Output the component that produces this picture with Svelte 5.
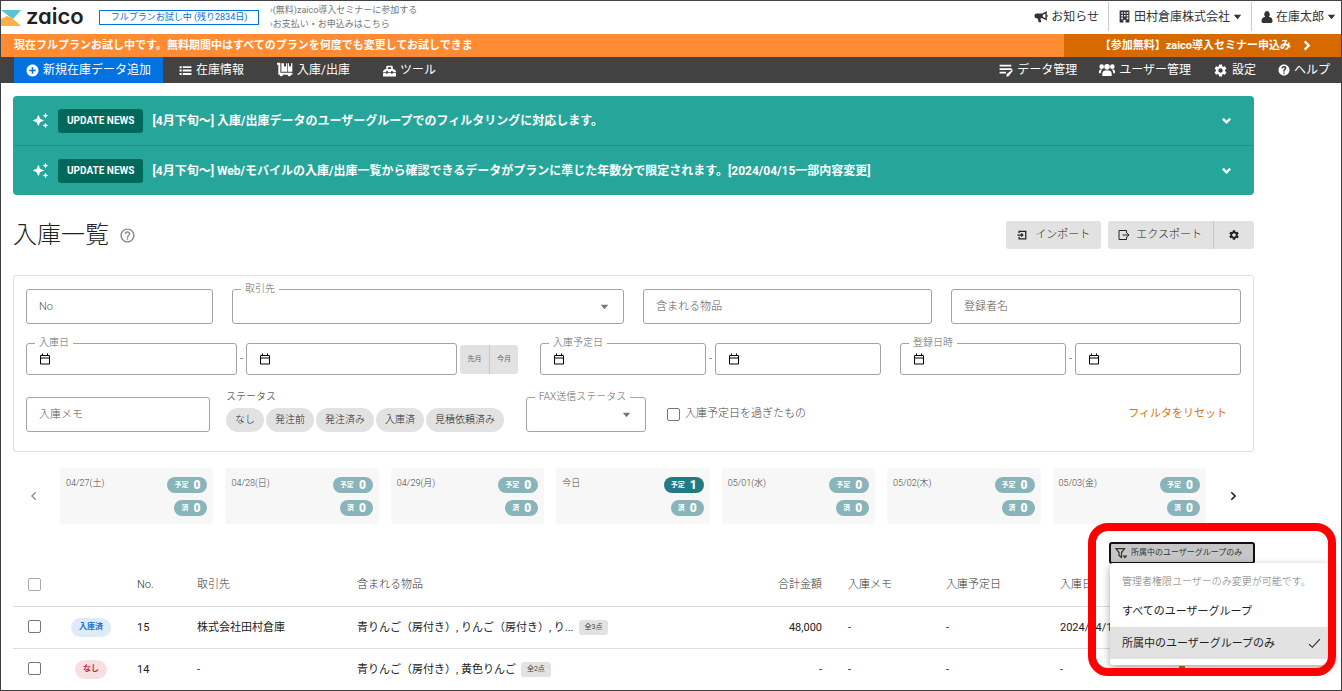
<script lang="ts">
	interface Day {
		label: string;
		planned: number;
		done: number;
	}

	interface Row {
		no: number;
		status: string;
		tone: 'blue' | 'red';
		supplier: string;
		items: string;
		count: string;
		total: string;
		memo: string;
		planned: string;
		date: string;
	}

	// 24x24 filled icon paths
	const icons = {
		plus: 'M12 1C5.9 1 1 5.9 1 12s4.900 11 11 11 11-4.900 11-11S18.100 1 12 1zm6 12.500h-4.500V18h-3v-4.500H6v-3h4.500V6h3v4.500H18v3z',
		list: 'M1 4h4v4H1zM7 4h16v3.500H7zM1 10h4v4H1zM7 10.300h16v3.500H7zM1 16.500h4v4H1zM7 16.700h16v3.500H7z',
		cart: 'M0 1h5v15h18v3h-2a2.500 2.500 0 1 1-5 0H9a2.500 2.500 0 1 1-5 0H2V4H0zM6.500 2h4v5l1.500-1 1.500 1V2h1.500v12.500h-8.500zM16 2h2v5l1.500-1 1.500 1V2h2v12.500h-7z',
		toolbox: 'M8 3h8a2 2 0 0 1 2 2v4h2l4 4v2h-6v-2h-3v2H9v-2H6v2H0v-2l4-4h2V5a2 2 0 0 1 2-2zm1 3v3h6V6zM0 16.500h6v1.500h3v-1.500h6v1.500h3v-1.500h6V23H0z',
		edit: 'M1 3h20v3H1zM1 9h21v3H1zM1 15h11v3H1zM22.500 11.500l1.500 1.500-7.500 9.500-4 .5.8-4z',
		users: 'M12 3a4.200 4.200 0 1 1 0 8.400A4.200 4.200 0 0 1 12 3zM5 21v-4c0-3 3-4.500 7-4.500s7 1.500 7 4.500v4zM4 3.500a3.500 3.500 0 1 1 0 7 3.500 3.500 0 0 1 0-7zm16 0a3.500 3.500 0 1 1 0 7 3.500 3.500 0 0 1 0-7zM0 17v-3c0-2 2-3 5-2.500-1.500 1-2.500 3-2.500 5.500zm24 0v-3c0-2-2-3-5-2.500 1.500 1 2.500 3 2.500 5.500z',
		gear: 'M19.140 12.940c.04-.3.06-.61.06-.94 0-.32-.02-.64-.07-.94l2.030-1.580c.18-.14.23-.41.12-.61l-1.920-3.320c-.12-.22-.37-.29-.59-.22l-2.390.96c-.5-.38-1.030-.7-1.620-.94l-.36-2.540c-.04-.24-.24-.41-.48-.41h-3.840c-.24 0-.43.17-.47.41l-.36 2.540c-.59.24-1.130.57-1.620.94l-2.390-.96c-.22-.08-.47 0-.59.22L2.740 8.870c-.12.21-.08.47.12.61l2.030 1.580c-.05.3-.09.63-.09.94s.02.64.07.94l-2.030 1.580c-.18.14-.23.41-.12.61l1.920 3.320c.12.22.37.29.59.22l2.390-.96c.5.38 1.030.7 1.620.94l.36 2.540c.05.24.24.41.48.41h3.840c.24 0 .44-.17.47-.41l.36-2.540c.59-.24 1.130-.56 1.620-.94l2.390.96c.22.08.47 0 .59-.22l1.920-3.320c.12-.22.07-.47-.12-.61l-2.010-1.580zM12 15.600c-1.980 0-3.600-1.620-3.600-3.600s1.620-3.600 3.600-3.600 3.600 1.620 3.600 3.600-1.620 3.600-3.600 3.600z',
		help: 'M12 1C5.900 1 1 5.900 1 12s4.900 11 11 11 11-4.900 11-11S18.100 1 12 1zm1.300 18.500h-3v-2.700h3v2.700zm1.800-8c-1.200 1-1.800 1.500-1.800 3.500h-3c0-3 .8-4 2.200-5.200 1.800-1.400.9-3-.6-3-1.200 0-1.900.8-1.900 2H7c0-2.800 2-4.800 5-4.800 4.500 0 6.500 4.500 3.100 7.500z',
		helpOutline: 'M11 18h2v-2h-2v2zm1-16C6.480 2 2 6.480 2 12s4.480 10 10 10 10-4.480 10-10S17.520 2 12 2zm0 18c-4.410 0-8-3.590-8-8s3.590-8 8-8 8 3.590 8 8-3.590 8-8 8zm0-14c-2.210 0-4 1.790-4 4h2c0-1.100.9-2 2-2s2 .9 2 2c0 2-3 1.750-3 5h2c0-2.250 3-2.500 3-5 0-2.210-1.790-4-4-4z',
		horn: 'M22 2v16l-8-4h-3l1.500 7H8l-2-7H4a3 3 0 0 1-3-3V9a3 3 0 0 1 3-3h10zM19.500 6L15 8.500v3l4.500 2.500zM23 8.500v3.500h1.500V8.500z',
		building: 'M3 1h18v22h-7v-5h-4v5H3zM6 4v3h3V4zm5 0v3h3V4zm5 0v3h3V4zM6 9v3h3V9zm5 0v3h3V9zm5 0v3h3V9zM6 14v3h3v-3zm10 0v3h3v-3z',
		person: 'M12 0a5.500 6.500 0 0 1 3.500 11.500c5 1 7.500 3.500 7.500 8.500 0 2-1 4-3 4H4c-2 0-3-2-3-4 0-5 2.500-7.500 7.500-8.500A5.500 6.500 0 0 1 12 0z',
		caret: 'M2 7h20L12 19z',
		sparkle: 'M19 9l1.250-2.750L23 5l-2.750-1.250L19 1l-1.250 2.750L15 5l2.750 1.250L19 9zm-7.500.5L9 4 6.500 9.500 1 12l5.500 2.500L9 20l2.500-5.500L17 12l-5.500-2.500zM19 15l-1.250 2.750L15 19l2.750 1.250L19 23l1.250-2.750L23 19l-2.750-1.250L19 15z',
		doc: 'M3 0h18v24H3z'
	};

	// 24x24 stroked icon paths
	const lines = {
		down: 'M4 8l8 8 8-8',
		left: 'M16 3L7 12l9 9',
		right: 'M8 3l9 9-9 9',
		login: 'M5 8V3h16v18H5v-5M1 12h13M10 8l4 4-4 4',
		logout: 'M17 8V3H2v18h15v-5M9 12h13M18 8l4 4-4 4',
		calendar: 'M3 5h18v17H3zM3 10h18M7 1v5M17 1v5',
		filter: 'M2 3h17l-6 8v10l-5-4v-6z',
		check: 'M2 13l6 6L22 4'
	};

	const statuses = ['なし', '発注前', '発注済み', '入庫済', '見積依頼済み'];
	const news = [
		'[4月下旬〜] 入庫/出庫データのユーザーグループでのフィルタリングに対応します。',
		'[4月下旬〜] Web/モバイルの入庫/出庫一覧から確認できるデータがプランに準じた年数分で限定されます。[2024/04/15一部内容変更]'
	];

	const days: Day[] = [
		{ label: '04/27(土)', planned: 0, done: 0 },
		{ label: '04/28(日)', planned: 0, done: 0 },
		{ label: '04/29(月)', planned: 0, done: 0 },
		{ label: '今日', planned: 1, done: 0 },
		{ label: '05/01(水)', planned: 0, done: 0 },
		{ label: '05/02(木)', planned: 0, done: 0 },
		{ label: '05/03(金)', planned: 0, done: 0 }
	];

	const rows: Row[] = [
		{
			no: 15,
			status: '入庫済',
			tone: 'blue',
			supplier: '株式会社田村倉庫',
			items: '青りんご（房付き）, りんご（房付き）, り...',
			count: '全3点',
			total: '48,000',
			memo: '-',
			planned: '-',
			date: '2024/04/17'
		},
		{
			no: 14,
			status: 'なし',
			tone: 'red',
			supplier: '-',
			items: '青りんご（房付き）, 黄色りんご',
			count: '全2点',
			total: '-',
			memo: '-',
			planned: '-',
			date: '-'
		}
	];

	const groups = ['すべてのユーザーグループ', '所属中のユーザーグループのみ'];
	let group = $state(groups[1]);
</script>

{#snippet icon(name: keyof typeof icons, size: number)}
	<svg width={size} height={size} viewBox="0 0 24 24" fill="currentColor" fill-rule="evenodd" aria-hidden="true">
		<path d={icons[name]} />
	</svg>
{/snippet}

{#snippet line(name: keyof typeof lines, size: number, weight: number)}
	<svg width={size} height={size} viewBox="0 0 24 24" fill="none" stroke="currentColor" stroke-width={weight} aria-hidden="true">
		<path d={lines[name]} />
	</svg>
{/snippet}

{#snippet dateField(id: string, label: string, floating: boolean)}
	<div class="field short">
		{#if floating}
			<label class="float" for={id}>{label}</label>
		{/if}
		<span class="cal">{@render line('calendar', 12, 2)}</span>
		<input {id} type="text" aria-label={floating ? undefined : label} />
	</div>
{/snippet}

<div class="page">
	<header class="top">
		<a class="logo" href="#home">
			<svg width="20" height="16" viewBox="0 0 20 16" aria-hidden="true">
				<path d="M0 0h20l-8 9z" fill="#5cc3d2" />
				<path d="M0 0l9 6.500 3 2.500z" fill="#47a3b3" />
				<path d="M0 16V9l6-3 5 2 9 8z" fill="#fcb045" />
			</svg>
			<span>zaico</span>
		</a>
		<a class="trial" href="#plan">フルプランお試し中 (残り2834日)</a>
		<div class="links">
			<a href="#seminar">›(無料)zaico導入セミナーに参加する</a>
			<a href="#payment">›お支払い・お申込みはこちら</a>
		</div>
		<div class="account">
			<a href="#notice">{@render icon('horn', 14)}お知らせ</a>
			<button type="button">{@render icon('building', 13)}田村倉庫株式会社{@render icon('caret', 9)}</button>
			<button type="button">{@render icon('person', 12)}在庫太郎{@render icon('caret', 9)}</button>
		</div>
	</header>

	<div class="banner">
		<p>現在フルプランお試し中です。無料期間中はすべてのプランを何度でも変更してお試しできま</p>
		<a href="#seminar">【参加無料】zaico導入セミナー申込み{@render line('right', 11, 5)}</a>
	</div>

	<nav class="nav">
		<a class="add" href="#new">{@render icon('plus', 13)}新規在庫データ追加</a>
		<a href="#stock">{@render icon('list', 13)}在庫情報</a>
		<a href="#inout">{@render icon('cart', 16)}入庫/出庫</a>
		<a href="#tools">{@render icon('toolbox', 13)}ツール</a>
		<div class="nav-right">
			<a href="#data">{@render icon('edit', 14)}データ管理</a>
			<a href="#users">{@render icon('users', 16)}ユーザー管理</a>
			<a href="#settings">{@render icon('gear', 15)}設定</a>
			<a href="#help">{@render icon('help', 12)}ヘルプ</a>
		</div>
	</nav>

	<main>
		<section class="news">
			{#each news as text (text)}
				<button type="button" class="news-row">
					{@render icon('sparkle', 17)}
					<span class="tag">UPDATE NEWS</span>
					<span class="news-text">{text}</span>
					{@render line('down', 11, 5)}
				</button>
			{/each}
		</section>

		<div class="heading">
			<h1>入庫一覧</h1>
			<button type="button" class="hint" aria-label="ヘルプ">{@render icon('helpOutline', 17)}</button>
			<div class="actions">
				<button type="button" class="btn">{@render line('login', 10, 3)}インポート</button>
				<div class="btn-group">
					<button type="button" class="btn">{@render line('logout', 12, 2)}エクスポート</button>
					<button type="button" class="btn cog" aria-label="設定">{@render icon('gear', 12)}</button>
				</div>
			</div>
		</div>

		<form class="filters">
			<div class="line first">
				<div class="field"><input type="text" placeholder="No" aria-label="No" /></div>
				<div class="field">
					<label class="float" for="supplier">取引先</label>
					<select id="supplier"><option></option></select>
					<span class="arrow">{@render icon('caret', 9)}</span>
				</div>
				<div class="field"><input type="text" placeholder="含まれる物品" aria-label="含まれる物品" /></div>
				<div class="field"><input type="text" placeholder="登録者名" aria-label="登録者名" /></div>
			</div>

			<div class="line second">
				<div class="range">
					{@render dateField('in-from', '入庫日', true)}
					<span class="dash">-</span>
					{@render dateField('in-to', '入庫日', false)}
					<div class="months">
						<button type="button">先月</button>
						<button type="button">今月</button>
					</div>
				</div>
				<div class="range">
					{@render dateField('plan-from', '入庫予定日', true)}
					<span class="dash">-</span>
					{@render dateField('plan-to', '入庫予定日', false)}
				</div>
				<div class="range">
					{@render dateField('reg-from', '登録日時', true)}
					<span class="dash">-</span>
					{@render dateField('reg-to', '登録日時', false)}
				</div>
			</div>

			<div class="line third">
				<div class="field"><input type="text" placeholder="入庫メモ" aria-label="入庫メモ" /></div>
				<div class="status">
					<span>ステータス</span>
					<div class="chips">
						{#each statuses as s (s)}
							<button type="button">{s}</button>
						{/each}
					</div>
				</div>
				<div class="field">
					<label class="float" for="fax">FAX送信ステータス</label>
					<select id="fax"><option></option></select>
					<span class="arrow">{@render icon('caret', 9)}</span>
				</div>
				<div class="rest">
					<label class="overdue"><input type="checkbox" />入庫予定日を過ぎたもの</label>
					<button type="reset" class="reset">フィルタをリセット</button>
				</div>
			</div>
		</form>

		<section class="week">
			<button type="button" class="prev" aria-label="前へ">{@render line('left', 10, 3)}</button>
			<div class="days">
				{#each days as d (d.label)}
					<div class="day">
						<span class="date">{d.label}</span>
						<div class="pills">
							<span class="pill" class:on={d.planned > 0}>予定 <b>{d.planned}</b></span>
							<span class="pill" class:on={d.done > 0}>済 <b>{d.done}</b></span>
						</div>
					</div>
				{/each}
			</div>
			<button type="button" class="next" aria-label="次へ">{@render line('right', 10, 4)}</button>
		</section>

		<div class="toolbar">
			<div class="group-filter">
				<button type="button" class="group-btn">
					<svg width="13" height="12" viewBox="0 0 26 24" aria-hidden="true">
						<path d={lines.filter} fill="none" stroke="currentColor" stroke-width="2.5" />
						<path d="M15 17h10l-5 6z" fill="currentColor" />
					</svg>
					{group}
				</button>
				<div class="menu">
					<p>管理者権限ユーザーのみ変更が可能です。</p>
					{#each groups as g (g)}
						<button type="button" class:selected={g === group} onclick={() => (group = g)}>
							{g}
							{#if g === group}{@render line('check', 13, 2)}{/if}
						</button>
					{/each}
				</div>
				<div class="ring"></div>
			</div>
		</div>

		<table>
			<thead>
				<tr>
					<th class="c-check"><input type="checkbox" aria-label="すべて選択" /></th>
					<th class="c-status"></th>
					<th class="c-no">No.</th>
					<th class="c-supplier">取引先</th>
					<th>含まれる物品</th>
					<th class="c-total">合計金額</th>
					<th class="c-memo">入庫メモ</th>
					<th class="c-planned">入庫予定日</th>
					<th class="c-date">入庫日</th>
					<th class="c-ops"></th>
				</tr>
			</thead>
			<tbody>
				{#each rows as r (r.no)}
					<tr>
						<td class="c-check"><input type="checkbox" aria-label={`No.${r.no}`} /></td>
						<td class="c-status"><span class="state {r.tone}">{r.status}</span></td>
						<td>{r.no}</td>
						<td>{r.supplier}</td>
						<td>{r.items}<span class="count">{r.count}</span></td>
						<td class="c-total">{r.total}</td>
						<td>{r.memo}</td>
						<td>{r.planned}</td>
						<td>{r.date}</td>
						<td class="c-ops">
							<div class="ops">
								<button type="button" class="doc" aria-label="伝票">{@render icon('doc', 8)}</button>
								<button type="button" aria-label="開く">{@render line('down', 8, 4)}</button>
							</div>
						</td>
					</tr>
				{/each}
			</tbody>
		</table>
	</main>
</div>

<style>
	:global(body) {
		background: #fff;
	}
	.page,
	.page * {
		box-sizing: border-box;
	}
	.page {
		min-height: 100vh;
		border: 1px solid #424242;
		overflow: hidden;
		font-family: Roboto, 'Noto Sans CJK JP', sans-serif;
		font-size: 11px;
		line-height: 16px;
		color: #222;
	}
	button,
	input,
	select {
		font: inherit;
		color: inherit;
		margin: 0;
	}
	button {
		padding: 0;
		border: 0;
		background: none;
		cursor: pointer;
	}
	a {
		color: inherit;
		text-decoration: none;
	}
	svg {
		flex: none;
		display: block;
	}
	p,
	h1 {
		margin: 0;
	}

	.top {
		display: flex;
		align-items: center;
		height: 33px;
	}
	.logo {
		display: flex;
		align-items: center;
		gap: 5px;
		width: 98px;
		color: #222;
	}
	.logo span {
		padding-bottom: 3px;
		font: 600 22px/26px Inter, sans-serif;
		font-feature-settings: 'cv11';
	}
	.trial {
		height: 15px;
		width: 160px;
		border: 1px solid #0073e0;
		font-size: 9px;
		line-height: 13px;
		text-align: center;
		color: #0073e0;
	}
	.links {
		display: flex;
		flex-direction: column;
		margin-left: 11px;
		padding-bottom: 2px;
		font-size: 9px;
		line-height: 14px;
		color: #777;
	}
	.account {
		display: flex;
		align-items: center;
		height: 100%;
		margin-left: auto;
		padding-bottom: 2px;
		font-size: 12px;
		color: #333;
	}
	.account > * {
		display: flex;
		align-items: center;
		gap: 3px;
		height: 29px;
		padding: 0 9px;
	}
	.account button {
		border-left: 1px solid #ccc;
	}
	.account button:last-child {
		padding-right: 5px;
	}

	.banner {
		display: flex;
		height: 23px;
		background: #ff8c33;
		color: #fff;
		font-weight: 700;
		line-height: 23px;
	}
	.banner p {
		flex: 1;
		padding-left: 13px;
		overflow: hidden;
		white-space: nowrap;
	}
	.banner a {
		display: flex;
		align-items: center;
		justify-content: flex-end;
		gap: 10px;
		width: 277px;
		padding-right: 29px;
		background: #d66a00;
	}

	.nav {
		display: flex;
		height: 26px;
		padding: 0 11px 0 13px;
		background: #424242;
		color: #fff;
		font-size: 12px;
	}
	.nav a {
		display: flex;
		align-items: center;
		gap: 4px;
		padding: 0 17px 0 16px;
	}
	.nav a.add {
		padding: 0 12px;
		background: #0073e0;
	}
	.nav-right {
		display: flex;
		gap: 22px;
		margin-left: auto;
	}
	.nav-right a {
		padding: 0;
	}

	main {
		padding: 13px 87px 0 12px;
	}
	.news {
		border-radius: 4px;
		background: #26a69a;
		color: #fff;
		overflow: hidden;
	}
	.news-row {
		display: flex;
		align-items: center;
		width: 100%;
		height: 49px;
		padding: 0 22px 0 19px;
		font-size: 12px;
		font-weight: 700;
		text-align: left;
	}
	.news-row:first-child {
		height: 50px;
		border-bottom: 1px solid #21938c;
	}
	.tag {
		height: 24px;
		margin: 0 9px;
		padding: 0 9px;
		border-radius: 3px;
		background: #00695c;
		font-size: 10px;
		font-weight: 700;
		line-height: 24px;
		white-space: nowrap;
	}
	.news-text {
		flex: 1;
	}

	.heading {
		display: flex;
		align-items: center;
		height: 80px;
	}
	h1 {
		font-size: 24px;
		font-weight: 300;
		line-height: 32px;
	}
	.hint {
		margin-left: 10px;
		color: #888;
	}
	.actions {
		display: flex;
		gap: 7px;
		margin-left: auto;
	}
	.btn {
		display: flex;
		align-items: center;
		gap: 8px;
		height: 28px;
		padding: 0 11px;
		border-radius: 3px;
		background: #e2e2e2;
		font-weight: 300;
		color: #222;
	}
	.btn-group {
		display: flex;
	}
	.btn-group .btn:first-child {
		padding: 0 11px 0 10px;
		gap: 6px;
		border-radius: 3px 0 0 3px;
	}
	.btn.cog {
		padding: 0 14px;
		border-left: 1px solid #c4c4c4;
		border-radius: 0 3px 3px 0;
	}

	.filters {
		display: flex;
		flex-direction: column;
		padding: 13px 12px 19px;
		border: 1px solid #e0e0e0;
		border-radius: 3px;
		font-weight: 300;
	}
	.line {
		display: grid;
	}
	.first {
		grid-template-columns: 187fr 392fr 289fr 290fr;
		gap: 19px;
	}
	.second {
		grid-template-columns: 495fr 341fr 341fr;
		gap: 19px;
		margin-top: 19px;
	}
	.third {
		grid-template-columns: 184fr 284fr 120fr 579fr;
		gap: 16px;
		margin-top: 22px;
	}
	.field {
		position: relative;
		display: flex;
		align-items: center;
		min-width: 0;
		height: 35px;
		border: 1px solid #a3a3a3;
		border-radius: 3px;
	}
	.field.short {
		flex: 1;
		height: 32px;
		padding-left: 12px;
	}
	.field input,
	.field select {
		flex: 1;
		width: 100%;
		min-width: 0;
		height: 100%;
		padding: 0 12px;
		border: 0;
		outline: 0;
		background: none;
		appearance: none;
	}
	.field input::placeholder {
		color: #555;
		opacity: 1;
	}
	.float {
		position: absolute;
		top: -9px;
		left: 8px;
		padding: 0 4px;
		background: #fff;
		font-size: 10px;
		line-height: 16px;
		white-space: nowrap;
		color: #666;
	}
	.arrow {
		position: absolute;
		right: 14px;
		color: #777;
		pointer-events: none;
	}
	.cal {
		color: #000;
	}
	.range {
		display: flex;
		align-items: center;
		min-width: 0;
	}
	.dash {
		width: 9px;
		text-align: center;
	}
	.months {
		display: flex;
		margin: 0 3px;
		border-radius: 3px;
		background: #e2e2e2;
		font-size: 7px;
		font-weight: 400;
		color: #666;
	}
	.months button {
		width: 29px;
		height: 29px;
	}
	.months button + button {
		border-left: 1px solid #c8c8c8;
	}
	.status {
		display: flex;
		flex-direction: column;
		justify-content: flex-end;
		height: 35px;
		font-size: 10px;
		color: #222;
	}
	.status > span {
		line-height: 18px;
	}
	.chips {
		display: flex;
		gap: 2px;
		margin-top: 2px;
	}
	.chips button {
		height: 24px;
		padding: 0 9px;
		border-radius: 12px;
		background: #e2e2e2;
		white-space: nowrap;
	}
	.rest {
		display: flex;
		align-items: center;
		justify-content: space-between;
		padding: 0 14px 1px 5px;
		color: #444;
	}
	.overdue {
		display: flex;
		align-items: center;
		gap: 5px;
	}
	input[type='checkbox'] {
		display: block;
		width: 13px;
		height: 13px;
		border: 1px solid #777;
		border-radius: 2px;
		background: #fff;
		appearance: none;
	}
	.reset {
		font-weight: 400;
		color: #d9730d;
	}

	.week {
		display: flex;
		align-items: center;
		margin-top: 16px;
	}
	.prev,
	.next {
		display: flex;
		justify-content: center;
		width: 47px;
		color: #888;
	}
	.prev {
		padding-right: 6px;
	}
	.next {
		width: 48px;
		padding-left: 6px;
		color: #222;
	}
	.days {
		flex: 1;
		display: flex;
		gap: 12px;
	}
	.day {
		flex: 1;
		display: flex;
		justify-content: space-between;
		height: 56px;
		padding: 9px 6px 8px;
		border-radius: 3px;
		background: #f7f7f7;
	}
	.date {
		font-size: 9px;
		line-height: 12px;
		font-weight: 300;
		color: #444;
	}
	.pills {
		display: flex;
		flex-direction: column;
		align-items: flex-end;
		gap: 7px;
	}
	.pill {
		display: flex;
		align-items: center;
		gap: 5px;
		height: 16px;
		padding: 0 7px;
		border-radius: 8px;
		background: #88b4ba;
		color: #fff;
		font-size: 7px;
		font-weight: 700;
	}
	.pill.on {
		background: #227a82;
	}
	.pill b {
		font-size: 12px;
	}

	.toolbar {
		display: flex;
		justify-content: flex-end;
		margin: 18px -1px 0 0;
	}
	.group-filter {
		position: relative;
	}
	.group-btn {
		display: flex;
		align-items: center;
		gap: 3px;
		width: 146px;
		height: 22px;
		padding: 0 4px;
		border: 2px solid #111;
		border-radius: 3px;
		background: #c6c6c6;
		font-size: 8px;
		white-space: nowrap;
		color: #333;
	}
	.menu {
		position: absolute;
		top: 21px;
		left: 1px;
		z-index: 1;
		width: 223px;
		padding: 5px 0 6px;
		border-radius: 3px;
		background: #fff;
		box-shadow: 0 3px 8px rgba(0, 0, 0, 0.35);
	}
	.menu p {
		padding: 0 12px;
		font-size: 10px;
		font-weight: 300;
		line-height: 27px;
		white-space: nowrap;
		color: #777;
	}
	.menu button {
		display: flex;
		align-items: center;
		justify-content: space-between;
		width: 100%;
		height: 32px;
		padding: 1px 12px 0;
		white-space: nowrap;
	}
	.menu button.selected {
		background: #e2e2e2;
	}
	.ring {
		position: absolute;
		inset: -19px -81px -112px -21px;
		z-index: 2;
		border: 8px solid #f00;
		border-radius: 20px;
		pointer-events: none;
	}

	table {
		width: 100%;
		table-layout: fixed;
		border-collapse: separate;
		border-spacing: 0;
	}
	th,
	td {
		height: 42px;
		padding: 0 12px;
		border-bottom: 1px solid #ddd;
		text-align: left;
		white-space: nowrap;
	}
	th {
		height: 43px;
		font-weight: 300;
		color: #333;
	}
	tbody tr:last-child td {
		height: 41px;
		border-bottom: 0;
	}
	th.c-check,
	td.c-check {
		width: 44px;
		padding: 0 15px 2px;
	}
	th input[type='checkbox'] {
		border-color: #aaa;
	}
	th.c-status,
	td.c-status {
		width: 68px;
		padding: 0;
		text-align: center;
	}
	.c-no {
		width: 60px;
	}
	.c-supplier {
		width: 160px;
	}
	th.c-total,
	td.c-total {
		width: 94px;
		padding-right: 14px;
		text-align: right;
	}
	.c-memo {
		width: 98px;
	}
	.c-planned {
		width: 114px;
	}
	.c-date {
		width: 118px;
	}
	.c-ops {
		width: 88px;
	}
	.state {
		display: inline-block;
		height: 19px;
		padding: 0 8px;
		border-radius: 10px;
		font-size: 8px;
		font-weight: 700;
		line-height: 18px;
	}
	.blue {
		background: #dfebf8;
		color: #1370cf;
	}
	.red {
		background: #f8dfe2;
		color: #d32035;
	}
	.count {
		display: inline-block;
		height: 15px;
		margin-left: 5px;
		padding: 0 6px;
		border-radius: 3px;
		background: #e2e2e2;
		font-size: 7px;
		line-height: 14px;
		vertical-align: middle;
		color: #444;
	}
	.ops {
		display: flex;
		justify-content: space-between;
		padding-right: 5px;
	}
	.doc {
		color: #c76a00;
	}
</style>
